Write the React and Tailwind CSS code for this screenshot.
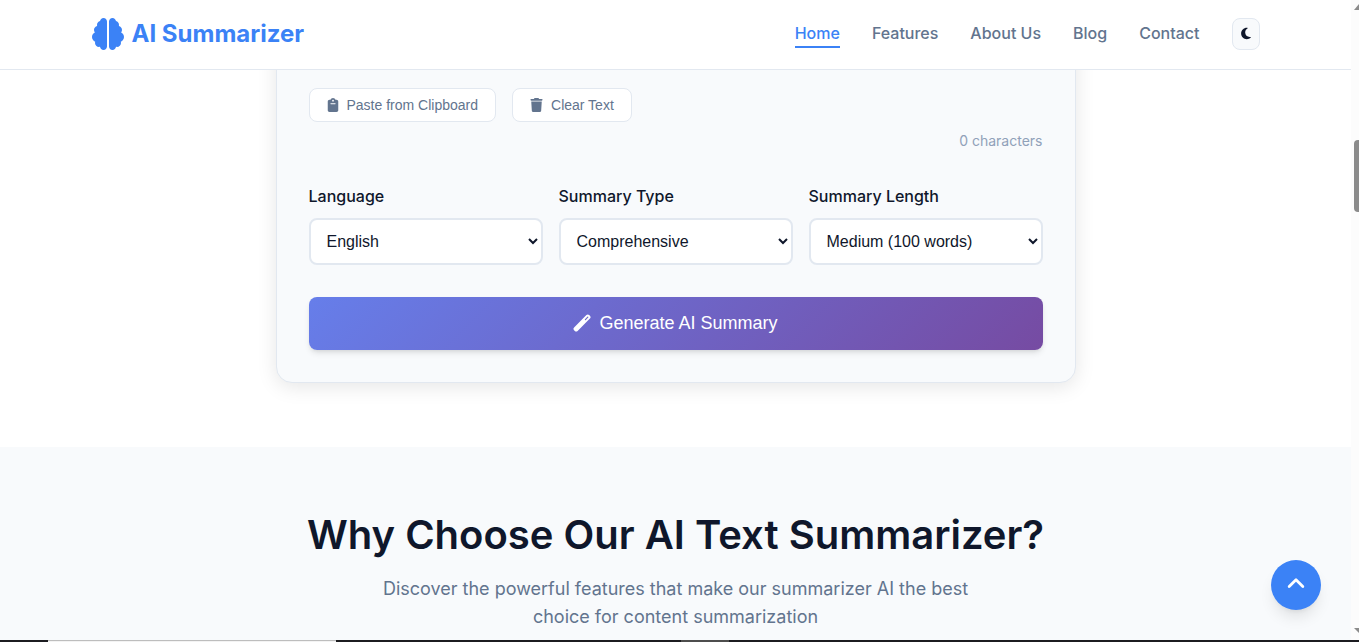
import { FaBrain, FaClipboard, FaMoon, FaTrash } from "react-icons/fa6";

const links = ["Home", "Features", "About Us", "Blog", "Contact"];

const options = [
  {
    id: "language",
    label: "Language",
    choices: ["English", "Spanish", "French", "German"],
  },
  {
    id: "type",
    label: "Summary Type",
    choices: ["Comprehensive", "Key Points", "Abstract"],
  },
  {
    id: "length",
    label: "Summary Length",
    initial: "Medium (100 words)",
    choices: ["Short (50 words)", "Medium (100 words)", "Long (200 words)"],
  },
];

function Header() {
  return (
    <header className="relative z-10 border-b border-slate-200 bg-white">
      <div className="mx-auto flex h-[69px] max-w-[1200px] items-center justify-between px-4 pb-0.5">
        <a href="#" className="flex items-center gap-2 text-2xl font-bold text-[#3b82f6]">
          <FaBrain className="size-8" />
          AI Summarizer
        </a>
        <nav className="flex items-center gap-8 text-base font-medium text-slate-500">
          {links.map((name, i) => (
            <a
              key={name}
              href="#"
              className={
                i === 0
                  ? "border-b-2 border-[#3b82f6] py-px text-[#3b82f6]"
                  : "border-b-2 border-transparent py-px"
              }
            >
              {name}
            </a>
          ))}
          <button
            type="button"
            aria-label="Toggle dark mode"
            className="flex h-8 w-7 items-center justify-center rounded-lg border border-slate-200 bg-slate-50 text-slate-900"
          >
            <FaMoon className="h-[13px] w-[10px]" />
          </button>
        </nav>
      </div>
    </header>
  );
}

function ToolButton({ icon: Icon, iconClass, children }) {
  return (
    <button
      type="button"
      className="flex items-center gap-2 rounded-lg border border-slate-200 bg-white px-[17px] py-2 font-['Liberation_Sans',sans-serif] text-sm leading-4 text-slate-500"
    >
      <Icon className={iconClass} />
      {children}
    </button>
  );
}

function WandIcon() {
  return (
    <svg className="size-[18px]" viewBox="0 0 18 18" fill="none" aria-hidden="true">
      <path
        d="M1.1 13.4 13.4 1.1a2 2 0 0 1 2.8 0l.7.7a2 2 0 0 1 0 2.8L4.6 16.9a2 2 0 0 1-2.8 0l-.7-.7a2 2 0 0 1 0-2.8Z"
        fill="currentColor"
      />
      <path d="m12.4 5.6 2.4-2.4" stroke="#6d68c7" strokeWidth="1.2" strokeLinecap="round" />
    </svg>
  );
}

function Select({ id, label, initial, choices }) {
  return (
    <div className="flex flex-col gap-[10px]">
      <label htmlFor={id} className="text-base leading-6 font-medium text-slate-900">
        {label}
      </label>
      <select
        id={id}
        defaultValue={initial ?? choices[0]}
        className="h-[47px] w-full rounded-lg border-2 border-slate-200 bg-white px-3 font-['Liberation_Sans',sans-serif] text-base text-slate-900"
      >
        {choices.map((c) => (
          <option key={c}>{c}</option>
        ))}
      </select>
    </div>
  );
}

function Summarizer() {
  return (
    <section className="-mt-8 px-4 pb-16">
      <div className="mx-auto max-w-[800px] rounded-2xl border border-slate-200 bg-slate-50 px-8 pt-[49px] pb-8 shadow-[0_4px_20px_rgba(0,0,0,0.1)]">
        <div className="flex gap-4">
          <ToolButton icon={FaClipboard} iconClass="h-[14px] w-[12px]">
            Paste from Clipboard
          </ToolButton>
          <ToolButton icon={FaTrash} iconClass="h-[14px] w-[13px]">
            Clear Text
          </ToolButton>
        </div>
        <p className="mt-2 text-right text-sm leading-[22px] text-slate-400">0 characters</p>
        <div className="mt-8 grid grid-cols-3 gap-4">
          {options.map((o) => (
            <Select key={o.id} {...o} />
          ))}
        </div>
        <button
          type="button"
          className="mt-8 flex h-[53px] w-full items-center justify-center gap-2 rounded-lg bg-[linear-gradient(135deg,#667eea_0%,#764ba2_100%)] pb-0.5 font-['Liberation_Sans',sans-serif] text-lg font-medium text-white shadow-md"
        >
          <WandIcon />
          Generate AI Summary
        </button>
      </div>
    </section>
  );
}

function Features() {
  return (
    <section className="grow bg-slate-50 px-4 pt-16 text-center">
      <h2 className="text-[40px] leading-[48px] font-semibold text-slate-900">
        Why Choose Our AI Text Summarizer?
      </h2>
      <p className="mx-auto mt-4 max-w-[600px] text-lg leading-7 text-slate-500">
        Discover the powerful features that make our summarizer AI the best choice for content
        summarization
      </p>
    </section>
  );
}

function ScrollTrack() {
  return (
    <div className="flex w-2 shrink-0 flex-col items-end bg-[#fcfcfc]">
      <svg className="mt-1 h-1.5 w-[5px] fill-[#8b8b8b]" viewBox="0 0 5 6">
        <path d="M5 0v6H0z" />
      </svg>
      <div className="mt-[130px] h-[72px] w-[5px] rounded-l bg-[#8b8b8b]" />
      <svg className="mt-auto mb-[7px] h-[5px] w-[5px] fill-[#8b8b8b]" viewBox="0 0 5 5">
        <path d="M0 0h5v5z" />
      </svg>
    </div>
  );
}

export default function App() {
  return (
    <div className="flex h-screen flex-col overflow-hidden bg-white font-['Inter',sans-serif]">
      <div className="flex min-h-0 grow">
        <div className="flex min-w-0 grow flex-col">
          <Header />
          <main className="flex grow flex-col">
            <Summarizer />
            <Features />
          </main>
        </div>
        <ScrollTrack />
      </div>
      <div className="flex h-0.5 shrink-0 bg-[#1c1c20]">
        <div className="ml-12 w-72 border-t border-[#bdbdbd] bg-[#f3f3f3]" />
        <div className="ml-[345px] w-12 bg-[#4d4d4d]" />
      </div>
      <button
        type="button"
        aria-label="Back to top"
        className="fixed right-[38px] bottom-8 flex size-[50px] items-center justify-center rounded-full bg-[#3b82f6] text-white shadow-lg"
      >
        <svg
          className="size-5"
          viewBox="0 0 20 20"
          fill="none"
          stroke="currentColor"
          strokeWidth="2.8"
          strokeLinecap="round"
          strokeLinejoin="round"
        >
          <path d="M3.2 11.5L10 4.8l6.8 6.7" />
        </svg>
      </button>
    </div>
  );
}
